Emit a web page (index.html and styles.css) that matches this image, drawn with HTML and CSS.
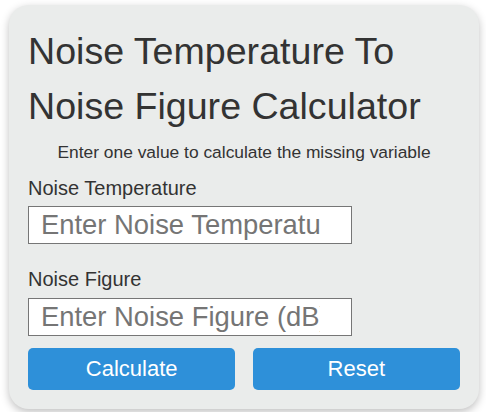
FILE: index.html
```html
<!DOCTYPE html>
<html>
<head>
    <title>Noise Temperature To Noise Figure Calculator</title>
    <link rel="stylesheet" href="styles.css">
</head>
<body>
    <div class="calculator">
        <h1>Noise Temperature To Noise Figure Calculator</h1>
        <p class="hint">Enter one value to calculate the missing variable</p>
        <div class="field">
            <label for="temp">Noise Temperature</label>
            <input type="number" id="temp" placeholder="Enter Noise Temperature (K)">
        </div>
        <div class="field second">
            <label for="nf">Noise Figure</label>
            <input type="number" id="nf" placeholder="Enter Noise Figure (dB)">
        </div>
        <div class="buttons">
            <button onclick="calculate()">Calculate</button>
            <button onclick="resetForm()">Reset</button>
        </div>
    </div>

    <script>
    function calculate() {
        const temp = document.getElementById('temp');
        const nf = document.getElementById('nf');
        if (temp.value && !nf.value) {
            nf.value = (10 * Math.log10(1 + parseFloat(temp.value) / 290)).toFixed(4);
        } else if (nf.value && !temp.value) {
            temp.value = (290 * (Math.pow(10, parseFloat(nf.value) / 10) - 1)).toFixed(4);
        }
    }

    function resetForm() {
        document.getElementById('temp').value = '';
        document.getElementById('nf').value = '';
    }
    </script>
</body>
</html>
```

FILE: styles.css
```css
body { font-family: "Liberation Sans", Arial, sans-serif; margin: 0; color: #333; }
.calculator {
    box-sizing: border-box;
    width: 470px;
    margin: 5px 9px;
    padding: 19px 19px 19px 19px;
    background: #eaeceb;
    border-radius: 20px;
    box-shadow: 0 3px 8px rgba(0,0,0,0.25);
}
h1 { font-size: 37.6px; font-weight: normal; line-height: 55px; margin: 0; color: #333; }
.hint { font-size: 17.4px; line-height: 20px; text-align: center; margin: 8px 0 0; }
.field { margin-top: 15px; }
.field.second { margin-top: 24px; }
.field label { display: block; font-size: 20px; line-height: 23px; margin-bottom: 6px; }
.field.second label { margin-bottom: 7px; }
input {
    display: block;
    box-sizing: border-box;
    width: 75%;
    height: 38px;
    margin: 0;
    padding: 0 16px 0 12px;
    font-family: "Liberation Sans", Arial, sans-serif;
    font-size: 27.4px;
    border: 1px solid #767676;
    border-radius: 0;
    background: #fff;
}
input::placeholder { color: #757575; }
.buttons { display: flex; justify-content: space-between; margin-top: 12px; }
button {
    width: 48%;
    height: 42px;
    background: #2e90d9;
    color: white;
    font-family: "Liberation Sans", Arial, sans-serif;
    font-size: 22px;
    border: none;
    border-radius: 5px;
    cursor: pointer;
}
button:hover { background: #2680c4; }
```
